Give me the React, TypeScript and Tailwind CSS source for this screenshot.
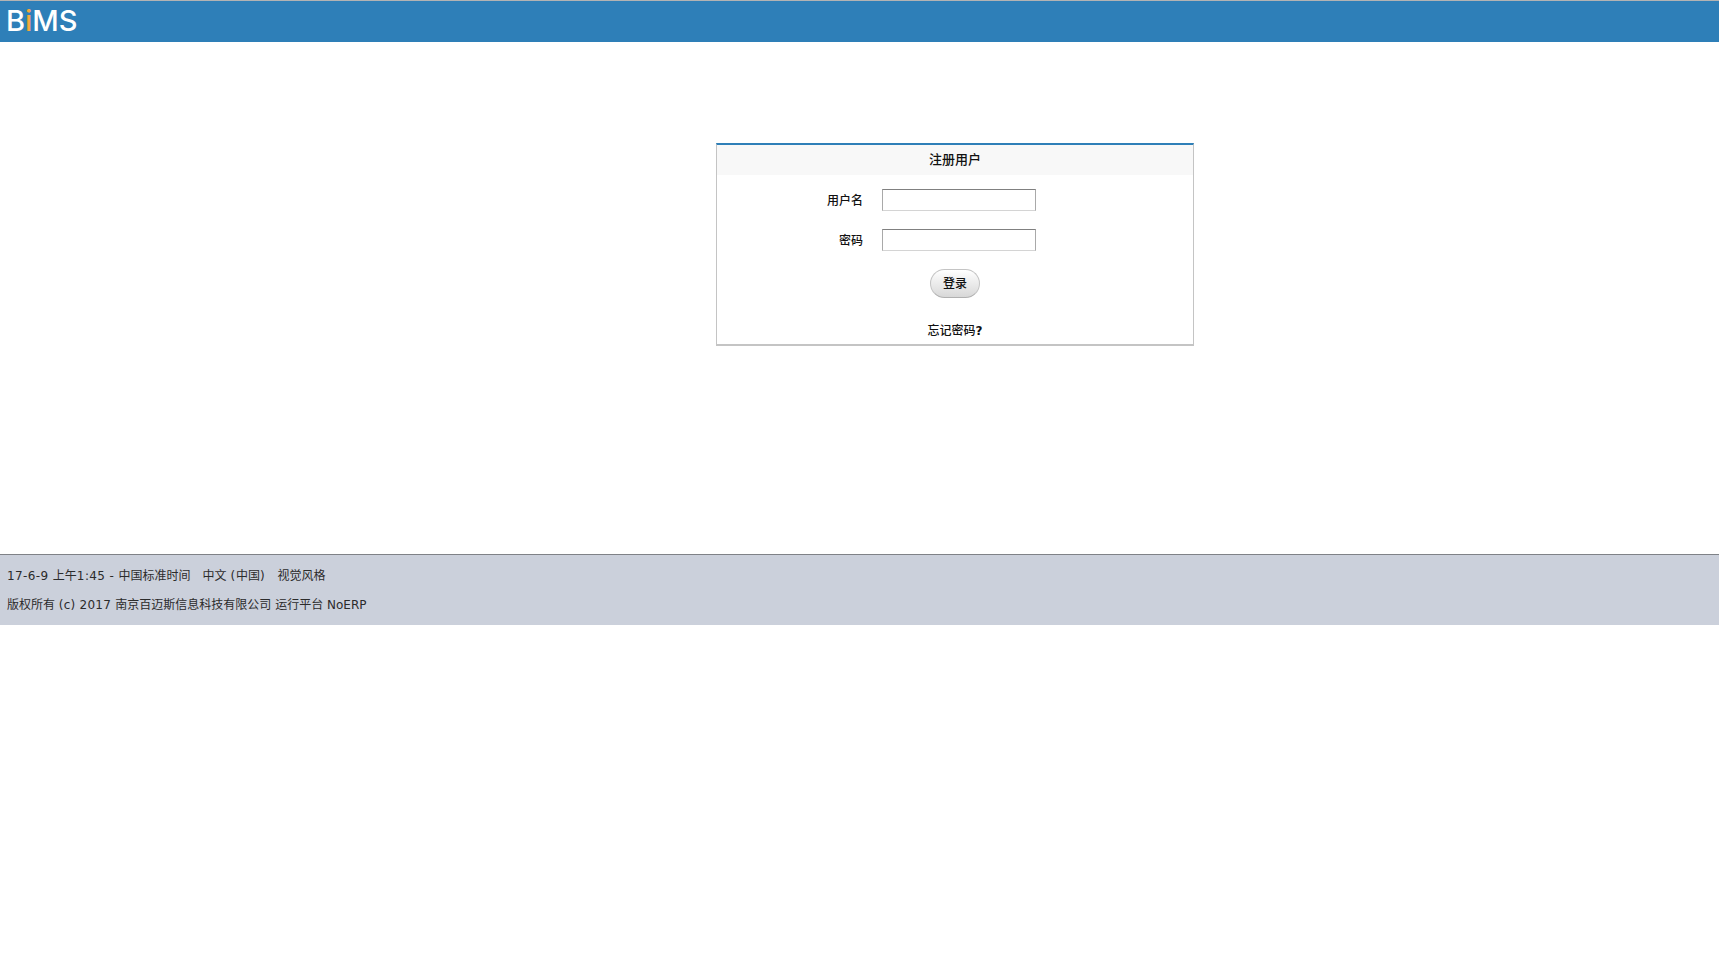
const uiFont = { fontFamily: '"DejaVu Sans", "Noto Sans CJK SC", sans-serif' };

function Field({ label, type }: { label: string; type: string }) {
  return (
    <div className="flex h-[22px] items-center">
      <label className="w-[146px] pt-[1px] text-right text-[12px] font-medium text-[#111]">{label}</label>
      <input
        type={type}
        className="ml-[19px] h-[22px] w-[154px] border border-[#a9a9a9] border-t-[#808080] border-b-[#d4d4d4] bg-white"
      />
    </div>
  );
}

export default function App() {
  return (
    <div className="min-h-[969px] bg-white text-[12px] text-[#333]" style={uiFont}>
      <header className="flex h-[42px] items-start border-t border-t-[#b3b3b3] bg-[#2e7fb8] pt-[5px] pl-[6px]">
        <div className="flex items-baseline text-[29px] leading-[30px] font-medium text-white" style={{ fontFamily: "Inter, sans-serif" }}>
          <span>B</span>
          <span className="text-[#f5a83c]">i</span>
          <span>MS</span>
        </div>
      </header>

      <main className="h-[512px] pt-[101px] pl-[716px]">
        <section className="h-[203px] w-[478px] border border-t-2 border-b-2 border-[#c4c4c4] border-t-[#2e7fb8]">
          <h1 className="flex h-[30px] items-center justify-center bg-[#f8f8f8] text-[13px] font-medium text-[#111]">注册用户</h1>
          <form className="flex flex-col gap-[18px] pt-[14px]">
            <Field label="用户名" type="text" />
            <Field label="密码" type="password" />
          </form>
          <div className="flex justify-center pt-[18px]">
            <button className="h-[29px] w-[50px] rounded-[15px] border border-[#c4c4c4] border-b-[#b0b0b0] bg-gradient-to-b from-white to-[#d8d8d8] text-[12px] font-medium text-[#111]">
              登录
            </button>
          </div>
          <div className="pt-[24px] text-center text-[12px] leading-[18px] font-medium text-[#111]">
            忘记密码<span className="font-bold">?</span>
          </div>
        </section>
      </main>

      <footer className="h-[71px] border-t border-t-[#7f8287] bg-[#cbd0db] pl-[7px] text-[12px] text-[#2b2b2b]">
        <div className="flex h-[36px] items-center gap-[12px] pt-[6px]">
          <span>
            <span className="tracking-[0.4px]">17-6-9 </span>上午<span className="tracking-[0.4px]">1:45 - </span>中国标准时间
          </span>
          <span>
            中文 <span className="tracking-[0.8px]">(</span>中国<span className="tracking-[0.8px]">)</span>
          </span>
          <span>视觉风格</span>
        </div>
        <div className="flex h-[24px] items-center gap-[4px] pt-[4px]">
          <span>
            版权所有 <span className="tracking-[0.25px]">(c) 2017 </span>南京百迈斯信息科技有限公司
          </span>
          <span>运行平台 NoERP</span>
        </div>
      </footer>
    </div>
  );
}
